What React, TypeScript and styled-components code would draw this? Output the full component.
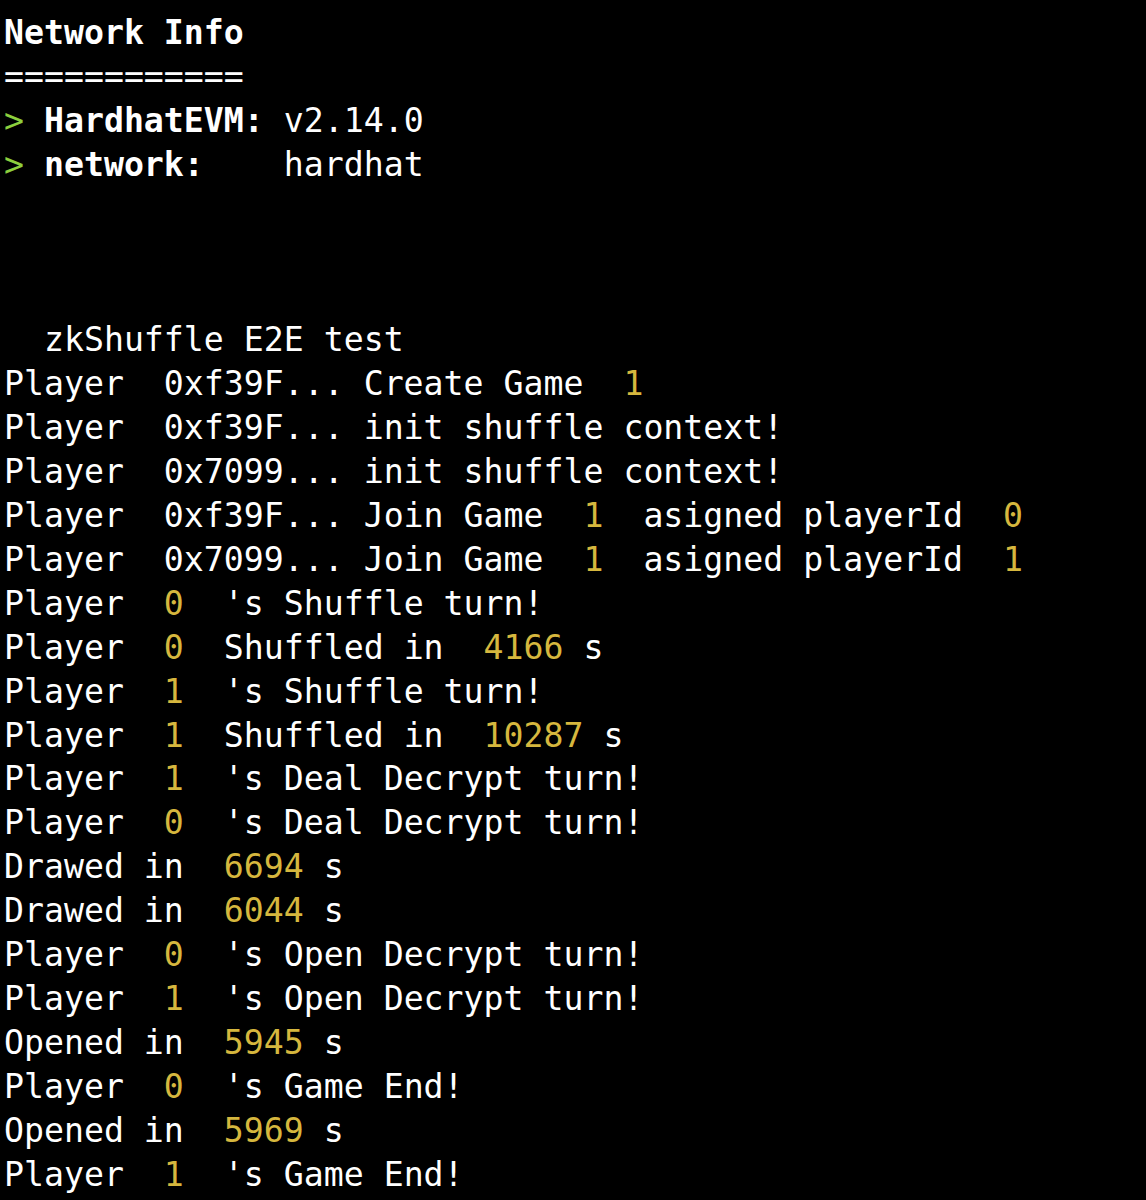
import React from "react";
import styled, { createGlobalStyle } from "styled-components";

const GlobalStyle = createGlobalStyle`
  html, body {
    margin: 0;
    padding: 0;
    background: #000000;
  }
  body {
    font-family: "DejaVu Sans Mono", "Liberation Mono", monospace;
  }
`;

const Terminal = styled.div`
  background: #000000;
  min-height: 1200px;
  padding: 11px 0 0 4px;
  box-sizing: border-box;
  font-family: "DejaVu Sans Mono", "Liberation Mono", monospace;
  font-size: 33.2px;
  line-height: 43.92px;
  color: #ffffff;
`;

const Line = styled.div`
  white-space: pre;
  height: 43.92px;
`;

type Tone = "plain" | "num" | "prompt" | "bold";

const Seg = styled.span<{ $tone: Tone }>`
  color: ${(p) =>
    p.$tone === "num" ? "#d6b73e" : p.$tone === "prompt" ? "#8ccf3e" : "#ffffff"};
  font-weight: ${(p) => (p.$tone === "bold" ? 700 : 400)};
`;

type Part = [Tone, string];

const lines: Part[][] = [
  [["bold", "Network Info"]],
  [["plain", "============"]],
  [["prompt", "> "], ["bold", "HardhatEVM:"], ["plain", " v2.14.0"]],
  [["prompt", "> "], ["bold", "network:"], ["plain", "    hardhat"]],
  [],
  [],
  [],
  [["plain", "  zkShuffle E2E test"]],
  [["plain", "Player  0xf39F... Create Game  "], ["num", "1"]],
  [["plain", "Player  0xf39F... init shuffle context!"]],
  [["plain", "Player  0x7099... init shuffle context!"]],
  [["plain", "Player  0xf39F... Join Game  "], ["num", "1"], ["plain", "  asigned playerId  "], ["num", "0"]],
  [["plain", "Player  0x7099... Join Game  "], ["num", "1"], ["plain", "  asigned playerId  "], ["num", "1"]],
  [["plain", "Player  "], ["num", "0"], ["plain", "  's Shuffle turn!"]],
  [["plain", "Player  "], ["num", "0"], ["plain", "  Shuffled in  "], ["num", "4166"], ["plain", " s"]],
  [["plain", "Player  "], ["num", "1"], ["plain", "  's Shuffle turn!"]],
  [["plain", "Player  "], ["num", "1"], ["plain", "  Shuffled in  "], ["num", "10287"], ["plain", " s"]],
  [["plain", "Player  "], ["num", "1"], ["plain", "  's Deal Decrypt turn!"]],
  [["plain", "Player  "], ["num", "0"], ["plain", "  's Deal Decrypt turn!"]],
  [["plain", "Drawed in  "], ["num", "6694"], ["plain", " s"]],
  [["plain", "Drawed in  "], ["num", "6044"], ["plain", " s"]],
  [["plain", "Player  "], ["num", "0"], ["plain", "  's Open Decrypt turn!"]],
  [["plain", "Player  "], ["num", "1"], ["plain", "  's Open Decrypt turn!"]],
  [["plain", "Opened in  "], ["num", "5945"], ["plain", " s"]],
  [["plain", "Player  "], ["num", "0"], ["plain", "  's Game End!"]],
  [["plain", "Opened in  "], ["num", "5969"], ["plain", " s"]],
  [["plain", "Player  "], ["num", "1"], ["plain", "  's Game End!"]],
];

export default function App() {
  return (
    <>
      <GlobalStyle />
      <Terminal>
        {lines.map((parts, i) => (
          <Line key={i}>
            {parts.map(([tone, text], j) => (
              <Seg key={j} $tone={tone}>
                {text}
              </Seg>
            ))}
          </Line>
        ))}
      </Terminal>
    </>
  );
}
